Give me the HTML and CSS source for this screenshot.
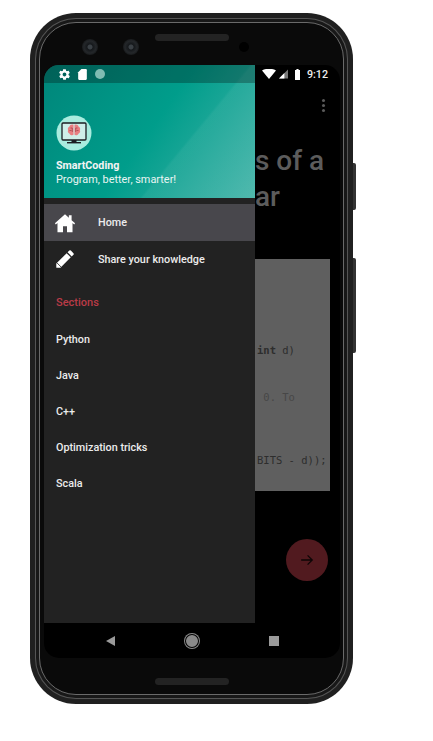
FILE: index.html
```html
<!DOCTYPE html>
<html lang="en">
<head>
<meta charset="utf-8">
<title>SmartCoding</title>
<link rel="stylesheet" href="styles.css">
</head>
<body>
<div class="stage">
  <div class="phone">
    <span class="side-btn power"></span>
    <span class="side-btn volume"></span>
    <div class="band">
      <div class="band-inner">
        <div class="bezel">
          <div class="bezel-top">
            <span class="camera"></span>
            <span class="camera"></span>
            <span class="speaker top-speaker"></span>
            <span class="sensor"></span>
          </div>
          <div class="screen">
            <div class="content">
              <aside class="drawer">
                <div class="drawer-head">
                  <div class="status status-left">
                    <svg class="st-icon" viewBox="0 0 24 24" width="13" height="13"><path fill="#fff" d="M19.4 13c.1-.3.1-.7.1-1s0-.7-.1-1l2.100-1.600c.2-.2.2-.4.1-.6l-2-3.500c-.1-.2-.4-.3-.6-.2l-2.500 1c-.5-.4-1.100-.7-1.700-1l-.4-2.600c0-.3-.2-.4-.5-.4h-4c-.3 0-.5.1-.5.4l-.4 2.600c-.6.3-1.200.6-1.700 1l-2.500-1c-.2-.1-.5 0-.6.2l-2 3.500c-.1.2-.1.4.1.6L4.600 11c-.1.3-.1.7-.1 1s0 .7.1 1l-2.100 1.600c-.2.2-.2.4-.1.6l2 3.500c.1.2.4.3.6.2l2.500-1c.5.4 1.100.7 1.700 1l.4 2.600c0 .3.2.4.5.4h4c.3 0 .5-.1.5-.4l.4-2.600c.6-.3 1.200-.6 1.700-1l2.500 1c.2.1.5 0 .6-.2l2-3.500c.1-.2.1-.4-.1-.6L19.400 13zM12 15.500c-1.900 0-3.500-1.600-3.500-3.500s1.600-3.500 3.500-3.500 3.500 1.600 3.500 3.500-1.600 3.500-3.500 3.500z"/></svg>
                    <svg class="st-icon" viewBox="0 0 24 24" width="13" height="13"><path fill="#fff" d="M18 2h-8L4 8v12c0 1.100.9 2 2 2h12c1.100 0 2-.9 2-2V4c0-1.100-.9-2-2-2z"/></svg>
                    <span class="st-dot"></span>
                  </div>
                  <div class="header">
                    <svg class="logo" viewBox="0 0 36 36" width="36" height="36">
                      <circle cx="18" cy="18" r="17.500" fill="#a9ecdf"/>
                      <rect x="6" y="8" width="24" height="17" rx="1" fill="#cfeee9" stroke="#1d1d22" stroke-width="1.300"/>
                      <rect x="15.500" y="25" width="5" height="2.400" fill="#1d1d22"/>
                      <rect x="11" y="27" width="14" height="1.400" fill="#1d1d22"/>
                      <path fill="#e97f83" d="M17.500 9.800c-1.800-.9-3.700 0-4 1.600-1.500.6-2.100 2.300-1.400 3.700-.7 1.500 0 3.200 1.500 3.600.6 1.500 2.700 2.100 3.900 1.100z"/>
                      <path fill="#e97f83" d="M18.500 9.800c1.800-.9 3.700 0 4 1.600 1.500.6 2.100 2.300 1.400 3.700.7 1.500 0 3.200-1.500 3.600-.6 1.500-2.700 2.100-3.900 1.100z"/>
                      <path fill="none" stroke="#9c3f47" stroke-width=".7" d="M14.500 13h1.800v4M21.500 13h-1.800v4M13.500 15.500h2M22.500 15.500h-2"/>
                    </svg>
                    <div class="brand">SmartCoding</div>
                    <div class="tagline">Program, better, smarter!</div>
                  </div>
                </div>
                <nav class="menu">
                  <a class="row active">
                    <svg class="row-icon" viewBox="0 0 24 24" width="22" height="22"><path fill="#fff" d="M12 2.500 1 12.300l1 1.200 1.800-1.500V22h6v-6.500h4.400V22h6V12l1.800 1.500 1-1.200-3.800-3.400V3.500h-3v2.700z"/></svg>
                    <span>Home</span>
                  </a>
                  <a class="row">
                    <svg class="row-icon" viewBox="0 0 24 24" width="22" height="22">
                      <path fill="#fff" d="M2.500 17V21.500H7L18.300 10.200l-4.500-4.500zM21.200 7.300a1.200 1.200 0 0 0 0-1.700l-2.800-2.800a1.200 1.200 0 0 0-1.700 0l-1.900 1.900 4.500 4.500z"/>
                      <path fill="none" stroke="#222" stroke-width=".9" d="M3 16l5 5"/>
                    </svg>
                    <span>Share your knowledge</span>
                  </a>
                  <div class="section-title">Sections</div>
                  <a class="row plain">Python</a>
                  <a class="row plain">Java</a>
                  <a class="row plain">C++</a>
                  <a class="row plain">Optimization tricks</a>
                  <a class="row plain">Scala</a>
                </nav>
              </aside>
              <main class="page">
                <div class="status status-right">
                  <svg viewBox="0 0 14 10" width="14" height="10"><path fill="#fff" d="M0 1.500C4-.9 10-.9 14 1.500L7 10z"/></svg>
                  <svg viewBox="0 0 10 10" width="9" height="10"><path fill="#777" d="M10 0v10H0z"/><path fill="#fff" d="M6 4v6H0z"/></svg>
                  <svg class="battery" viewBox="0 0 7 12" width="5" height="11" preserveAspectRatio="none"><path fill="#fff" d="M2 0h3v1h2v11H0V1h2z"/></svg>
                  <span class="time">9:12</span>
                </div>
                <div class="toolbar">
                  <span class="dots"><i></i><i></i><i></i></span>
                </div>
                <h1 class="title"><span>s of a</span><span>ar</span></h1>
                <pre class="code">
<span><b>int</b> d)</span>
 
 
<span class="comment"> 0. To</span>
 
 
 
<span>BITS - d));</span></pre>
                <button class="fab" aria-label="Next">
                  <svg viewBox="0 0 24 24" width="14" height="14"><path fill="none" stroke="#0d0606" stroke-width="2.200" d="M2 12h19M13 4l8 8-8 8"/></svg>
                </button>
              </main>
            </div>
            <div class="navbar">
              <span class="nav-back"></span>
              <span class="nav-home"></span>
              <span class="nav-recent"></span>
            </div>
          </div>
          <div class="bezel-bottom">
            <span class="speaker"></span>
          </div>
        </div>
      </div>
    </div>
  </div>
</div>
</body>
</html>
```
FILE: styles.css
```css
* { box-sizing: border-box; }
html, body { margin: 0; padding: 0; background: #fff; }
body { width: 433px; height: 741px; overflow: hidden; font-family: Roboto, "Noto Sans", sans-serif; }

.stage { padding: 13px 0 0 30px; }

.phone {
  position: relative;
  width: 323px;
  height: 691px;
  padding: 5px;
  border-radius: 46px;
  background: #202020;
}
.side-btn {
  position: absolute;
  left: 323px;
  width: 3px;
  background: #333;
  border-radius: 0 2px 2px 0;
}
.power { top: 150px; height: 47px; }
.volume { top: 245px; height: 95px; }

.band {
  height: 100%;
  padding: 1px;
  border-radius: 41px;
  background: #555;
}
.band-inner {
  height: 100%;
  padding: 3px;
  border-radius: 40px;
  background: #181818;
}
.bezel {
  height: 100%;
  padding: 0 3px 0 4px;
  display: flex;
  flex-direction: column;
  border: 1px solid #6a6a6a;
  border-radius: 37px;
  background: #0a0a0a;
}
.bezel-top {
  height: 42px;
  flex: none;
  display: flex;
  align-items: flex-start;
  position: relative;
}
.camera {
  width: 16px;
  height: 16px;
  margin-top: 16px;
  border-radius: 50%;
  background: radial-gradient(circle, #3a4045 0 2px, #15181b 3px, #24272a 6px, #181a1c 8px);
}
.camera:first-child { margin-left: 38px; margin-right: 25px; }
.speaker {
  display: block;
  width: 74px;
  height: 7px;
  border-radius: 4px;
  background: #232323;
}
.top-speaker { margin: 11px 0 0 16px; }
.sensor {
  width: 10px;
  height: 10px;
  margin: 19px 0 0 10px;
  border-radius: 50%;
  background: #000;
}
.bezel-bottom {
  flex: 1;
  display: flex;
  justify-content: center;
  padding-top: 20px;
}

.screen {
  flex: none;
  height: 593px;
  background: #000;
  border-radius: 15px;
  overflow: hidden;
  display: flex;
  flex-direction: column;
}
.content { height: 558px; flex: none; display: flex; }

.drawer {
  width: 211px;
  flex: none;
  background: #222;
  display: flex;
  flex-direction: column;
}
.drawer-head {
  height: 133px;
  flex: none;
  background:
    linear-gradient(129.600deg, transparent 0 64%, rgba(255,255,255,.05) 65% 100%),
    linear-gradient(125deg, #00867a 0%, #009d8b 50%, #47b5aa 100%);
}
.status {
  height: 18px;
  display: flex;
  align-items: center;
}
.status-left {
  padding-left: 14px;
  gap: 5px;
  background: rgba(0,0,0,.27);
}
.st-dot {
  width: 10px;
  height: 10px;
  margin-left: 1px;
  border-radius: 50%;
  background: #7fbcb2;
}
.header { padding: 32px 12px 0; color: #fff; }
.logo { display: block; margin-bottom: 8px; }
.brand { font-size: 10.700px; font-weight: 700; line-height: 14px; color: #f4f4f4; }
.tagline { font-size: 10.900px; line-height: 14px; color: #e9f5f3; }

.menu { padding-top: 6px; }
.row {
  height: 36px;
  display: flex;
  align-items: center;
  padding-left: 12px;
  font-size: 10.800px;
  font-weight: 500;
  color: #ececec;
}
.row.active { height: 37px; background: #48474c; }
.row-icon { flex: none; width: 22px; margin: 0 22px 0 -2px; }
.section-title {
  height: 44px;
  padding: 19px 0 0 12px;
  font-size: 11px;
  line-height: 14px;
  font-weight: 500;
  color: #b93b47;
}

.page {
  position: relative;
  flex: 1;
  min-width: 0;
  overflow: hidden;
}
.status-right {
  justify-content: flex-end;
  padding-right: 12px;
  gap: 3px;
  color: #eee;
}
.battery { margin: 0 4px; }
.time { font-size: 10.700px; font-weight: 500; }
.toolbar {
  height: 44px;
  display: flex;
  justify-content: flex-end;
  align-items: center;
  padding-right: 15px;
}
.dots { display: flex; flex-direction: column; gap: 2px; }
.dots i { display: block; width: 3px; height: 3px; border-radius: 50%; background: #5a5a5a; }
.title {
  margin: 16px 0 0;
  font-size: 28px;
  line-height: 36px;
  font-weight: 500;
  color: #5c5c5c;
}
.title span { display: block; white-space: nowrap; }
.code {
  width: 75px;
  height: 232px;
  margin: 44px 0 0;
  padding: 84px 0 0 2px;
  background: #5f5f5f;
  font-family: "DejaVu Sans Mono", monospace;
  font-size: 10.500px;
  line-height: 15.750px;
  color: #2d2d2d;
  overflow: hidden;
}
.code .comment { color: #474747; }
.fab {
  position: absolute;
  left: 31px;
  top: 474px;
  width: 42px;
  height: 42px;
  padding: 0;
  border: 0;
  border-radius: 50%;
  background: #511a1f;
  display: flex;
  align-items: center;
  justify-content: center;
}

.navbar {
  flex: 1;
  display: grid;
  grid-template-columns: 81px 82px 81px;
  justify-content: center;
  justify-items: center;
  align-items: center;
}
.nav-back {
  width: 0;
  height: 0;
  border-style: solid;
  border-width: 5.500px 9px 5.500px 0;
  border-color: transparent #9a9a9a transparent transparent;
}
.nav-home {
  width: 14px;
  height: 14px;
  border-radius: 50%;
  background: #8a8a8a;
  box-shadow: 0 0 0 1px #000 inset, 0 0 0 1px #8a8a8a;
}
.nav-recent { width: 10px; height: 10px; background: #9a9a9a; }
```
